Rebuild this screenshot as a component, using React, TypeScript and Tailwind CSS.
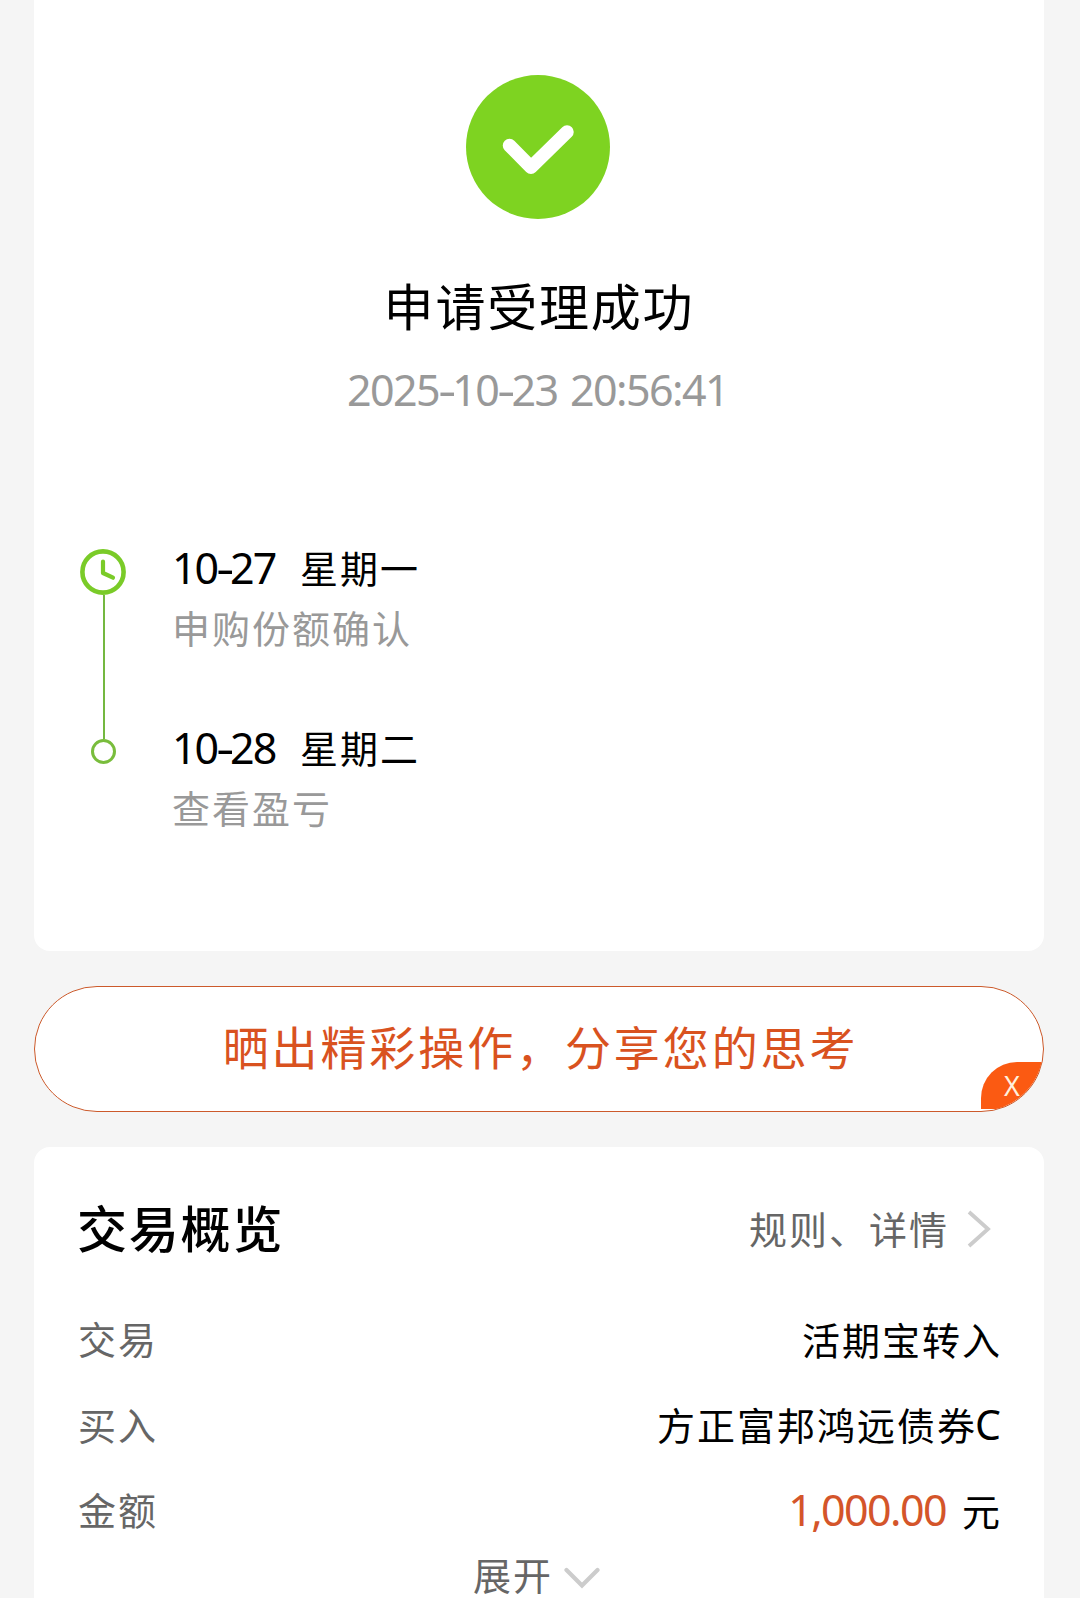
import { Fragment, type ReactNode } from "react"

interface TimelineEntry {
  date: string
  weekday: string
  label: string
}

interface DetailRow {
  label: string
  value: ReactNode
}

const timeline: TimelineEntry[] = [
  { date: "10-27", weekday: "星期一", label: "申购份额确认" },
  { date: "10-28", weekday: "星期二", label: "查看盈亏" },
]

const rows: DetailRow[] = [
  { label: "交易", value: "活期宝转入" },
  {
    label: "买入",
    value: (
      <>
        方正富邦鸿远债券<span className="-mr-px -ml-0.5 text-[41px] leading-none">C</span>
      </>
    ),
  },
  {
    label: "金额",
    value: (
      <>
        <span className="mr-[16px] text-[43px] tracking-[-1.6px] text-[#d4552a]">1,000.00</span>元
      </>
    ),
  },
]

// Dates use slightly wider hyphens than the font gives
function DateText({ value }: { value: string }) {
  return (
    <>
      {value.split("-").map((part, i) => (
        <Fragment key={i}>
          {i > 0 && <span className="mx-[0.5px] inline-block scale-x-130">-</span>}
          {part}
        </Fragment>
      ))}
    </>
  )
}

function SuccessIcon() {
  return (
    <svg className="mr-0.5 size-36" viewBox="0 0 144 144" fill="none">
      <circle cx="72" cy="72" r="72" fill="#7ed321" />
      <path d="M43.5 70.5 65 92.3 101 57" stroke="#fff" strokeWidth="13.5" strokeLinecap="round" strokeLinejoin="round" />
    </svg>
  )
}

function TimelineRail() {
  return (
    <div className="flex w-[46px] flex-col items-center">
      <svg className="size-[46px]" viewBox="0 0 46 46" fill="none" stroke="#7acb28">
        <circle cx="23" cy="23" r="20.6" strokeWidth="4.6" />
        <path d="M23 12.5V24l10 4.7" strokeWidth="4.2" strokeLinecap="round" strokeLinejoin="round" />
      </svg>
      <div className="ml-0.5 h-[144px] w-0.5 bg-[#74b840]" />
      <div className="size-[25px] rounded-full border-3 border-[#79bd3c]" />
    </div>
  )
}

export default function App() {
  return (
    <div className="h-[1598px] overflow-hidden bg-[#f5f5f5] pr-9 pl-[34px] font-['Noto_Sans','Noto_Sans_CJK_SC',sans-serif] text-black">
      <section className="flex h-[951px] flex-col rounded-b-2xl bg-white pt-[75px]">
        <div className="flex flex-col items-center">
          <SuccessIcon />
          <h1 className="mt-[56px] h-16 text-[50px] leading-16 tracking-[1.8px]">申请受理成功</h1>
          <p className="mt-[27px] mr-[3px] h-12 text-[43px] leading-12 tracking-[-1.6px] text-[#999] [word-spacing:3px]">
            <DateText value="2025-10-23 20:56:41" />
          </p>
        </div>
        <div className="mt-[135px] flex pl-[46px]">
          <TimelineRail />
          <div className="ml-[46px] flex flex-col">
            {timeline.map((entry) => (
              <div key={entry.date} className="h-[180px]">
                <div className="flex h-[38px] items-center leading-[38px]">
                  <span className="w-[128px] text-[43px] tracking-[-2px]">
                    <DateText value={entry.date} />
                  </span>
                  <span className="text-[38px] tracking-[2px]">{entry.weekday}</span>
                </div>
                <p className="mt-[22px] text-[38px] leading-[38px] tracking-[2px] text-[#999]">{entry.label}</p>
              </div>
            ))}
          </div>
        </div>
      </section>

      <div className="relative mt-[35px] flex h-[126px] items-center justify-center overflow-hidden rounded-full border border-[#cc5a2b] bg-white">
        <span className="mb-1 ml-[3px] text-[46px] leading-[60px] tracking-[2.9px] text-[#d9521f]">晒出精彩操作，分享您的思考</span>
        <button className="absolute right-0 bottom-0.5 flex h-[47px] w-[62px] items-center justify-center rounded-tl-[36px] bg-[#fb5a12] pt-[2px] text-[27px] text-[#fff0dc]">
          X
        </button>
      </div>

      <section className="mt-[35px] h-[480px] rounded-t-2xl bg-white px-11 pt-[50px]">
        <div className="flex h-16 items-center justify-between">
          <h2 className="-ml-px text-[50px] leading-16 font-medium tracking-[1.8px]">交易概览</h2>
          <div className="flex items-center gap-[18px] pr-[9px] text-[38px] tracking-[2px] text-[#666]">
            规则、详情
            <svg className="h-[38px] w-6" viewBox="0 0 24 38" fill="none" stroke="#ccc" strokeWidth="3.8">
              <path d="M2 2 21 19 2 36" />
            </svg>
          </div>
        </div>
        <div className="mt-[36px]">
          {rows.map((row) => (
            <div key={row.label} className="flex h-[85.4px] items-center justify-between text-[38px] tracking-[2px]">
              <span className="text-[#666]">{row.label}</span>
              <span className="-mr-0.5 leading-[52px] whitespace-nowrap">{row.value}</span>
            </div>
          ))}
        </div>
        <div className="flex h-[45px] items-center justify-center gap-[11px] pr-[5px] text-[38px] leading-[45px] tracking-[2px] text-[#666]">
          展开
          <svg className="mt-1 h-[22px] w-9" viewBox="0 0 36 22" fill="none" stroke="#ccc" strokeWidth="4.2" strokeLinecap="round">
            <path d="M2.5 3 18 18.5 33.5 3" />
          </svg>
        </div>
      </section>
    </div>
  )
}
